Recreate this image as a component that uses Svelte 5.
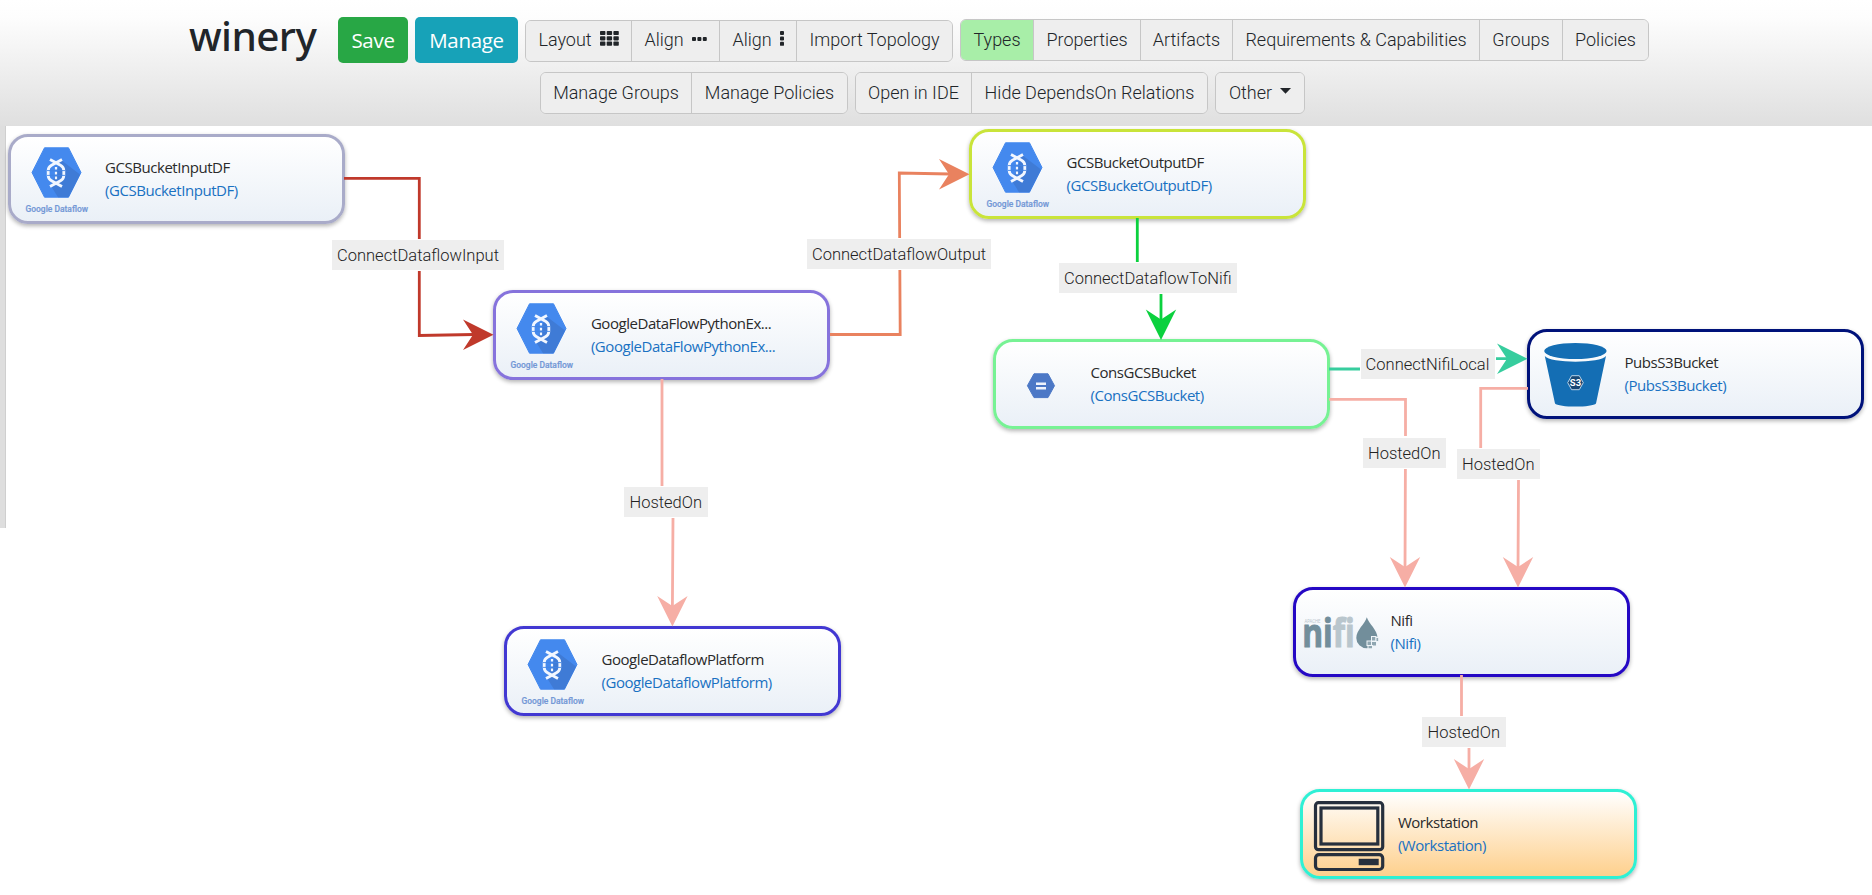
<script>
  const views = [
    { label: 'Layout', icon: 'grid', w: 107 },
    { label: 'Align', icon: 'dots-h', w: 88 },
    { label: 'Align', icon: 'dots-v', w: 77 },
    { label: 'Import Topology', w: 156 }
  ];
  const toggles = [
    { label: 'Types', active: true, w: 74 },
    { label: 'Properties', w: 107 },
    { label: 'Artifacts', w: 92 },
    { label: 'Requirements & Capabilities', w: 247 },
    { label: 'Groups', w: 83 },
    { label: 'Policies', w: 86 }
  ];
  const secondRow = [
    [{ label: 'Manage Groups', w: 152 }, { label: 'Manage Policies', w: 156 }],
    [{ label: 'Open in IDE', w: 117 }, { label: 'Hide DependsOn Relations', w: 236 }],
    [{ label: 'Other', icon: 'caret', w: 90 }]
  ];

  const nodes = [
    { name: 'GCSBucketInputDF', x: 7.5, y: 134, color: '#a9abc9', icon: 'dataflow' },
    { name: 'GoogleDataFlowPythonEx...', type: '(GoogleDataFlowPythonEx...', x: 493.4, y: 290, color: '#8673dc', icon: 'dataflow' },
    { name: 'GCSBucketOutputDF', x: 969, y: 129, color: '#c9e43a', icon: 'dataflow' },
    { name: 'ConsGCSBucket', x: 993, y: 339, color: '#77f294', icon: 'storage' },
    { name: 'PubsS3Bucket', x: 1527, y: 329, color: '#00127a', icon: 'bucket' },
    { name: 'GoogleDataflowPlatform', x: 504, y: 626, color: '#4238d2', icon: 'dataflow' },
    { name: 'Nifi', x: 1293, y: 587, color: '#2508c4', icon: 'nifi' },
    { name: 'Workstation', x: 1300.4, y: 789, color: '#2ff0d4', icon: 'workstation', warm: true }
  ];

  const pink = '#f6aea5';
  const edges = [
    { d: 'M344 178.3H419.3V335.5L474 334.5', color: '#c0392b', tip: [493.5, 334.7], dir: 0 },
    { d: 'M830 334.5H900.2L899.3 173L950 174', color: '#e9825f', tip: [969.5, 174.2], dir: 0 },
    { d: 'M1137.3 218V262M1161 294V322', color: '#0bd13e', tip: [1161, 340], dir: 90 },
    { d: 'M1329 369H1360M1496 358.7H1508', color: '#37cd9e', tip: [1527.5, 358.7], dir: 0 },
    { d: 'M1329 399.3H1405.5V436M1405.4 469L1405 570', color: pink, tip: [1405, 587.5], dir: 90 },
    { d: 'M1528 388.3H1480.7V448M1518.5 480L1518 570', color: pink, tip: [1518, 587.5], dir: 90 },
    { d: 'M662 379V486M673 518L672.4 608', color: pink, tip: [672.4, 626.5], dir: 90 },
    { d: 'M1461.5 675V716M1469 748V772', color: pink, tip: [1469, 789.5], dir: 90 }
  ];
  const labels = [
    { text: 'ConnectDataflowInput', x: 332, y: 240, w: 172 },
    { text: 'ConnectDataflowOutput', x: 807, y: 239, w: 184 },
    { text: 'ConnectDataflowToNifi', x: 1059, y: 263, w: 177.5 },
    { text: 'ConnectNifiLocal', x: 1360.5, y: 349, w: 134 },
    { text: 'HostedOn', x: 1362.5, y: 438, w: 83.5 },
    { text: 'HostedOn', x: 1456.5, y: 449, w: 83.5 },
    { text: 'HostedOn', x: 624, y: 487, w: 83.5 },
    { text: 'HostedOn', x: 1422, y: 717, w: 83.5 }
  ];
</script>

{#snippet group(items)}
  <div class="group">
    {#each items as b}
      <button class:active={b.active} style:width="{b.w}px">
        <span>{b.label}</span>
        {#if b.icon === 'grid'}
          <svg width="19" height="17" viewBox="0 0 19 17">
            {#each [0, 1, 2] as r}{#each [0, 1, 2] as c}
              <rect x={c * 6.7} y={r * 5.3} width="5.4" height="4.1" rx=".8" />
            {/each}{/each}
          </svg>
        {:else if b.icon === 'dots-h'}
          <svg width="15" height="6" viewBox="0 0 15 6">
            {#each [0, 1, 2] as c}<rect x={c * 5.4} width="4" height="4" rx=".9" />{/each}
          </svg>
        {:else if b.icon === 'dots-v'}
          <svg width="4" height="17" viewBox="0 0 4 17">
            {#each [0, 1, 2] as c}<rect y={c * 5.4} width="4" height="4" rx=".9" />{/each}
          </svg>
        {:else if b.icon === 'caret'}
          <svg class="caret" width="11" height="6" viewBox="0 0 11 6"><path d="M0 0h11L5.5 5.8z" /></svg>
        {/if}
      </button>
    {/each}
  </div>
{/snippet}

<header>
  <div class="row first">
    <h1>winery</h1>
    <button class="solid save">Save</button>
    <button class="solid manage">Manage</button>
    {@render group(views)}
    <div class="toggles">{@render group(toggles)}</div>
  </div>
  <div class="row second">
    {#each secondRow as items}{@render group(items)}{/each}
  </div>
</header>

<main>
  <aside></aside>
  {#each nodes as n}
    <article class="node" class:warm={n.warm} style:left="{n.x}px" style:top="{n.y - 126}px" style:border-color={n.color}>
      <svg class="logo" width="94" height="84" viewBox="3 3 94 84">
        {#if n.icon === 'dataflow'}
          <path d="M36.5 13.8H60.5L73 38.5L60.5 63.2H36.5L24 38.5z" fill="#4489ee" stroke="#4489ee" stroke-linejoin="round" />
          <path d="M53 26L72 40.5L60.5 63.2H50L43 52z" fill="#3f7bd6" />
          <g fill="none" stroke="#f2f7ff" stroke-width="2.8">
            <path d="M42 25.5L52.5 31.3Q55.8 33.2 55.8 36.5V41.5Q55.8 44.8 52.5 46.7L42 52.5" />
            <path d="M54 25.5L43.5 31.3Q40.2 33.2 40.2 36.5V41.5Q40.2 44.8 43.5 46.7L54 52.5" />
            <path d="M48 33V45.5" stroke-width="2.2" stroke-dasharray="2.6 2.2" />
          </g>
          <path d="M39 36.6H57M39 41.4H57" stroke="#4284e4" stroke-width=".9" />
          <text x="17.5" y="78" textLength="62.5" lengthAdjust="spacingAndGlyphs" class="caption">Google Dataflow</text>
        {:else if n.icon === 'storage'}
          <path d="M41 34.8H55L61.5 46.7L55 58.6H41L34.4 46.7z" fill="#4c78c6" stroke="#4c78c6" stroke-linejoin="round" />
          <path d="M43 44.8H53M43 49.2H53" stroke="#eef3fc" stroke-width="2.5" />
        {:else if n.icon === 'bucket'}
          <ellipse cx="48.4" cy="22" rx="31.2" ry="8" fill="#146eb4" />
          <path d="M17.8 27C23 34.5 74 34.5 79 27L69 74.5C66 78.6 31 78.6 28 74.5z" fill="#146eb4" />
          <path d="M44.6 46.7H52.3L56.3 53.7L52.3 60.7H44.6L40.7 53.7z" fill="#194874" stroke="#b8d3e8" />
          <text x="48.5" y="57.2" text-anchor="middle" class="s3">S3</text>
        {:else if n.icon === 'nifi'}
          <text x="11.5" y="35.6" textLength="16" lengthAdjust="spacingAndGlyphs" class="apache">APACHE</text>
          <text x="9.2" y="60.3" textLength="52.5" lengthAdjust="spacingAndGlyphs" class="nifi">ni<tspan>fi</tspan></text>
          <path d="M73.8 30.3C76 37 84.5 43 84.5 51A10.6 10.3 0 0 1 63.3 51C63.3 43 72 37 73.8 30.3z" fill="#728e9b" />
          <g fill="#8fa6b1" stroke="#eff4f8" stroke-width="1">
            <rect x="74" y="54" width="4.5" height="4.5" /><rect x="78.5" y="49.5" width="4.5" height="4.5" />
            <rect x="78.5" y="54.5" width="5" height="4.5" /><rect x="75" y="58.5" width="4.5" height="3.3" />
            <rect x="83" y="50.5" width="2.7" height="4" />
          </g>
        {:else}
          <g fill="none" stroke="#27303d" stroke-width="3.2">
            <rect x="15.5" y="13.7" width="67.2" height="47" rx="3" />
            <rect x="21" y="19" width="56.8" height="36" />
            <rect x="15.5" y="65.7" width="67.2" height="14.8" rx="3.5" />
          </g>
          <rect x="58.7" y="69.8" width="20" height="6.4" fill="#27303d" />
        {/if}
      </svg>
      <div class="names">
        <div>{n.name}</div>
        <div class="type">{n.type ?? `(${n.name})`}</div>
      </div>
    </article>
  {/each}

  <svg class="edges" width="1872" height="769" viewBox="0 126 1872 769">
    {#each edges as e}
      <path d={e.d} fill="none" stroke={e.color} stroke-width="2.8" />
      <path d="M0 0L-30.5 -15.2L-20.5 0L-30.5 15.2z" fill={e.color} transform="translate({e.tip[0]} {e.tip[1]}) rotate({e.dir})" />
    {/each}
  </svg>

  {#each labels as l}
    <span class="label" style:left="{l.x}px" style:top="{l.y - 126}px" style:width="{l.w}px">{l.text}</span>
  {/each}
</main>

<style>
  :global(body) { background: #fff; overflow: hidden; }
  header {
    box-sizing: border-box;
    height: 126px;
    padding-top: 17px;
    background: linear-gradient(#fff 0, #fdfdfd 14%, #dfdfdf 100%);
    font-family: Roboto, sans-serif;
  }
  .row { display: flex; align-items: center; }
  .first { height: 46px; padding-left: 189px; }
  .second { margin-top: 9px; padding-left: 540px; gap: 7px; }
  h1 {
    width: 149px;
    margin: -8px 0 0;
    font: 500 40.5px/48px "Noto Sans", "Open Sans", sans-serif;
    letter-spacing: -.6px;
    color: #212529;
  }
  button {
    box-sizing: border-box;
    display: flex;
    align-items: center;
    justify-content: center;
    padding: 0;
    border: 0;
    white-space: nowrap;
  }
  .solid {
    height: 46px;
    border-radius: 5px;
    color: #fff;
    font: 400 20.5px "Open Sans", sans-serif;
    letter-spacing: -.3px;
  }
  .save { width: 70px; background: #28a745; }
  .manage { width: 103px; margin: 0 7px; background: #17a2b8; }
  .group {
    display: flex;
    box-sizing: border-box;
    height: 42px;
    border: 1px solid #c6c6c6;
    border-radius: 6px;
    overflow: hidden;
    background: #eee;
  }
  .first > .group { margin: 2px 7px 0 0; }
  .group button {
    height: 40px;
    gap: 8px;
    padding-bottom: 2px;
    background: #eee;
    color: #212529;
    font: 300 18px Roboto, sans-serif;
  }
  .first > .group button { padding-bottom: 3px; }
  .toggles .group button { padding-bottom: 1px; }
  .group button + button { border-left: 1px solid #c6c6c6; }
  .group button:first-child { margin-left: -1px; margin-right: -1px; }
  .group .active { background: #a8eea8; }
  .group svg { fill: #212529; }
  .caret { margin-top: -2px; }

  main { position: relative; height: 769px; overflow: hidden; }
  aside {
    width: 6px;
    height: 402px;
    box-sizing: border-box;
    background: #dedede;
    border-right: 1px solid #cfcfcf;
  }
  .node {
    position: absolute;
    box-sizing: border-box;
    display: flex;
    width: 337px;
    height: 90px;
    border: 3px solid;
    border-radius: 20px;
    background: linear-gradient(#fff, #eaf0f7);
    box-shadow: 0 2px 4px rgba(0, 0, 0, .3);
  }
  .warm { background: linear-gradient(#fff, #fed08d); }
  .logo { flex: none; }
  .names {
    padding: 19px 0 0 .5px;
    font: 400 15px/23px "Open Sans", sans-serif;
    letter-spacing: -.45px;
    color: #2a2a2a;
    white-space: nowrap;
  }
  .type { color: #1971c2; }
  .caption { font: 500 9px Roboto, sans-serif; fill: #7398d6; stroke: #7398d6; stroke-width: .2; }
  .s3 { font: 700 9.5px Roboto, sans-serif; fill: #fff; }
  .apache { font: 400 4.5px Roboto, sans-serif; fill: #b9c6cd; }
  .nifi { font: 700 39px "Open Sans", sans-serif; fill: #728e9b; stroke: #728e9b; stroke-width: 1; }
  .nifi tspan { fill: #b9c6cd; stroke: #b9c6cd; }
  .edges { position: absolute; left: 0; top: 0; }
  .label {
    position: absolute;
    height: 30px;
    background: #eee;
    box-shadow: 0 0 0 1px #fff;
    color: #222;
    text-align: center;
    font: 300 16.5px/31px Roboto, sans-serif;
    white-space: nowrap;
  }
</style>
